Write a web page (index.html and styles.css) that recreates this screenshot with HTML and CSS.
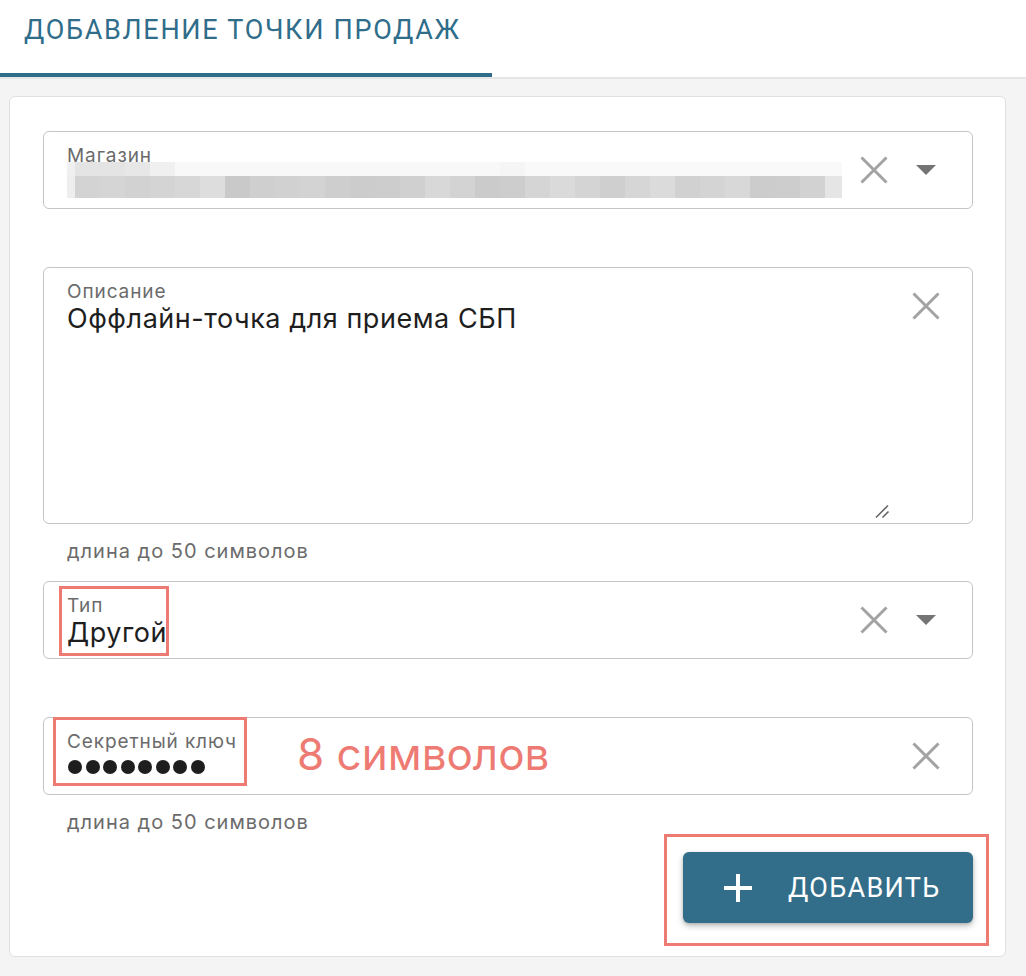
FILE: index.html
```html
<!DOCTYPE html>
<html lang="ru">
<head>
<meta charset="utf-8">
<title>Добавление точки продаж</title>
<link rel="stylesheet" href="styles.css">
</head>
<body>
<header class="tabs">
  <div class="tab">ДОБАВЛЕНИЕ ТОЧКИ ПРОДАЖ</div>
</header>
<main class="page">
  <section class="card">
    <div class="group">
      <div class="field">
        <div class="content">
          <div class="label">Магазин</div>
          <div class="blur"><div class="blur-top"></div><div class="blur-bottom"></div></div>
        </div>
        <div class="icons">
          <span class="slot"><svg class="ico-x" viewBox="0 0 28 28" width="28" height="28"><path d="M1.5 1.5L26.5 26.5M26.5 1.5L1.5 26.5"/></svg></span>
          <span class="slot"><svg class="ico-tri" viewBox="0 0 20 10" width="20" height="10"><path d="M0 0H20L10 10Z"/></svg></span>
        </div>
      </div>
      <div class="details"></div>
    </div>

    <div class="group">
      <div class="field field-tall">
        <div class="content">
          <div class="label">Описание</div>
          <div class="value">Оффлайн-точка для приема СБП</div>
        </div>
        <div class="icons">
          <span class="slot"><svg class="ico-x" viewBox="0 0 28 28" width="28" height="28"><path d="M1.5 1.5L26.5 26.5M26.5 1.5L1.5 26.5"/></svg></span>
        </div>
        <svg class="resize" viewBox="0 0 15 15" width="15" height="15"><path d="M1 13.5L13 1.5M7.5 13.5L13.5 7.5"/></svg>
      </div>
      <div class="details">длина до 50 символов</div>
    </div>

    <div class="group">
      <div class="field">
        <div class="content">
          <div class="label">Тип</div>
          <div class="value">Другой</div>
        </div>
        <div class="icons">
          <span class="slot"><svg class="ico-x" viewBox="0 0 28 28" width="28" height="28"><path d="M1.5 1.5L26.5 26.5M26.5 1.5L1.5 26.5"/></svg></span>
          <span class="slot"><svg class="ico-tri" viewBox="0 0 20 10" width="20" height="10"><path d="M0 0H20L10 10Z"/></svg></span>
        </div>
        <div class="mark mark-type"></div>
      </div>
      <div class="details"></div>
    </div>

    <div class="group">
      <div class="field">
        <div class="content">
          <div class="label">Секретный ключ</div>
          <div class="dots"><i></i><i></i><i></i><i></i><i></i><i></i><i></i><i></i></div>
        </div>
        <div class="icons">
          <span class="slot"><svg class="ico-x" viewBox="0 0 28 28" width="28" height="28"><path d="M1.5 1.5L26.5 26.5M26.5 1.5L1.5 26.5"/></svg></span>
        </div>
        <div class="mark mark-key"></div>
        <div class="note">8 символов</div>
      </div>
      <div class="details">длина до 50 символов</div>
    </div>

    <div class="actions">
      <button class="btn" type="button">
        <svg viewBox="0 0 30 30" width="30" height="30"><path d="M15 1V29M1 15H29"/></svg>
        <span>ДОБАВИТЬ</span>
        <span class="mark mark-btn"></span>
      </button>
    </div>
  </section>
</main>
</body>
</html>
```
FILE: styles.css
```css
* { box-sizing: border-box; }

body {
  margin: 0;
  background: #f4f4f4;
  font-family: Inter, "Noto Sans", sans-serif;
}

.tabs {
  height: 79px;
  background: #fff;
  border-bottom: 2px solid #e6e6e6;
  display: flex;
}

.tab {
  width: 492px;
  height: 77px;
  padding: 14px 0 0 24px;
  font-family: Roboto, "Liberation Sans", sans-serif;
  font-size: 27px;
  font-weight: 400;
  line-height: 32px;
  letter-spacing: 1.7px;
  color: #2f6d8a;
  border-bottom: 4px solid #306d8a;
}

.page {
  padding: 17px 20px 19px 9px;
}

.card {
  background: #fff;
  border: 1px solid #e0e0e0;
  border-radius: 6px;
  padding: 34px 32px 33px 33px;
}

.field {
  position: relative;
  display: flex;
  height: 78px;
  border: 1px solid #c4c4c4;
  border-radius: 6px;
}

.field-tall { height: 257px; }

.content {
  flex: 1;
  min-width: 0;
  padding: 12px 0 0 23px;
}

.label {
  font-size: 19px;
  line-height: 23px;
  letter-spacing: 0.9px;
  color: #6b6b6b;
}

.value {
  font-size: 27px;
  line-height: 32px;
  letter-spacing: 0.55px;
  color: #1e1e1e;
}

.icons {
  display: flex;
  align-items: center;
  height: 76px;
  padding-right: 20px;
}

.slot {
  width: 52px;
  height: 52px;
  display: flex;
  align-items: center;
  justify-content: center;
}

.ico-x path {
  stroke: #a3a3a3;
  stroke-width: 3;
  fill: none;
}

.ico-tri path { fill: #747474; }

.resize {
  position: absolute;
  right: 82px;
  bottom: 4px;
}

.resize path {
  stroke: #666;
  stroke-width: 1.6;
  fill: none;
}

.blur {
  width: 775px;
  margin-top: -5px;
}

.blur-top {
  height: 14px;
  background: linear-gradient(to right,
    #f0f0f0 0 8px, #e4e4e4 8px 58px, #e7e7e7 58px 83px, #f0f0f0 83px 108px,
    #f8f8f8 108px 433px, #f5f5f5 433px 458px, #f9f9f9 458px 100%);
}

.blur-bottom {
  height: 22px;
  background: linear-gradient(to right,
    #eeeeee 0 8px,
    #d3d3d3 8px 33px, #d5d5d5 33px 58px, #d2d2d2 58px 83px, #d4d4d4 83px 108px,
    #d7d7d7 108px 133px, #dddddd 133px 158px, #c9c9c9 158px 183px, #cfcfcf 183px 208px,
    #d1d1d1 208px 233px, #d3d3d3 233px 258px, #cecece 258px 283px, #cccccc 283px 308px,
    #cdcdcd 308px 333px, #d0d0d0 333px 358px, #d8d8d8 358px 383px, #d3d3d3 383px 408px,
    #cbcbcb 408px 433px, #cdcdcd 433px 458px, #d5d5d5 458px 483px, #dadada 483px 508px,
    #d4d4d4 508px 533px, #cfcfcf 533px 558px, #d6d6d6 558px 583px, #dbdbdb 583px 608px,
    #d1d1d1 608px 633px, #d4d4d4 633px 658px, #d8d8d8 658px 683px, #cccccc 683px 708px,
    #cdcdcd 708px 733px, #d2d2d2 733px 758px, #e5e5e5 758px 100%);
}

.dots {
  display: flex;
  gap: 3.5px;
  padding-top: 7px;
  padding-left: 1px;
}

.dots i {
  width: 14px;
  height: 14px;
  border-radius: 50%;
  background: #1e1e1e;
}

.details {
  height: 57.5px;
  padding: 16px 0 0 24px;
  font-size: 20px;
  line-height: 23px;
  letter-spacing: 1px;
  color: #6b6b6b;
}

.mark {
  position: absolute;
  border: 3px solid #ee7b73;
  pointer-events: none;
}

.mark-type { left: 15px; top: 4px; width: 110px; height: 70px; }
.mark-key { left: 9px; top: -1px; width: 194px; height: 69px; }
.mark-btn { left: -19px; top: -18px; width: 325px; height: 112px; }

.note {
  position: absolute;
  left: 253px;
  top: 14px;
  font-size: 44px;
  line-height: 44px;
  color: #ee7b73;
}

.actions {
  display: flex;
  justify-content: flex-end;
}

.btn {
  position: relative;
  width: 290px;
  height: 71px;
  display: flex;
  align-items: center;
  padding: 0 0 0 40px;
  border: none;
  border-radius: 6px;
  background: #326e8a;
  color: #fff;
  font-family: Roboto, "Liberation Sans", sans-serif;
  font-size: 27px;
  font-weight: 400;
  letter-spacing: 1.3px;
  box-shadow: 0 3px 6px rgba(0, 0, 0, 0.25), 0 1px 3px rgba(0, 0, 0, 0.12);
}

.btn svg { margin-right: 35px; }

.btn svg path {
  stroke: #fff;
  stroke-width: 4;
  fill: none;
}
```
